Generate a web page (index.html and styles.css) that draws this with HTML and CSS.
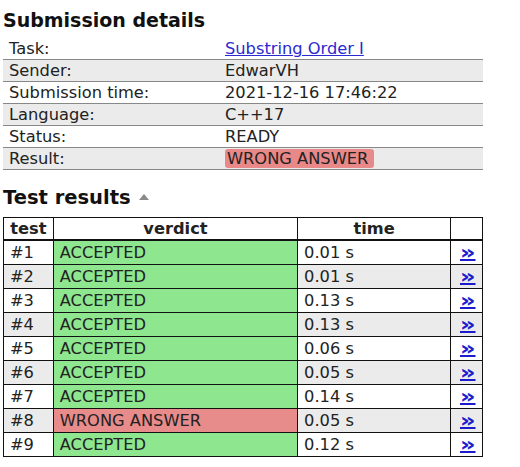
FILE: index.html
```html
<!DOCTYPE html>
<html>
<head>
<meta charset="utf-8">
<link rel="stylesheet" href="styles.css">
</head>
<body>
<h2 class="title">Submission details</h2>
<table class="summary">
<tr><td class="label">Task:</td><td><a href="#" class="task">Substring Order I</a></td></tr>
<tr><td class="label">Sender:</td><td>EdwarVH</td></tr>
<tr><td class="label">Submission time:</td><td>2021-12-16 17:46:22</td></tr>
<tr><td class="label">Language:</td><td>C++17</td></tr>
<tr><td class="label">Status:</td><td>READY</td></tr>
<tr><td class="label">Result:</td><td><span class="badge">WRONG ANSWER</span></td></tr>
</table>
<h2 class="title sub">Test results <span class="tri"></span></h2>
<table class="tests">
<tr><th class="c-test">test</th><th class="c-verdict">verdict</th><th class="c-time">time</th><th class="c-link"></th></tr>
<tr><td>#1</td><td class="ok">ACCEPTED</td><td>0.01 s</td><td class="lk"><a href="#">»</a></td></tr>
<tr><td>#2</td><td class="ok">ACCEPTED</td><td>0.01 s</td><td class="lk"><a href="#">»</a></td></tr>
<tr><td>#3</td><td class="ok">ACCEPTED</td><td>0.13 s</td><td class="lk"><a href="#">»</a></td></tr>
<tr><td>#4</td><td class="ok">ACCEPTED</td><td>0.13 s</td><td class="lk"><a href="#">»</a></td></tr>
<tr><td>#5</td><td class="ok">ACCEPTED</td><td>0.06 s</td><td class="lk"><a href="#">»</a></td></tr>
<tr><td>#6</td><td class="ok">ACCEPTED</td><td>0.05 s</td><td class="lk"><a href="#">»</a></td></tr>
<tr><td>#7</td><td class="ok">ACCEPTED</td><td>0.14 s</td><td class="lk"><a href="#">»</a></td></tr>
<tr><td>#8</td><td class="wa">WRONG ANSWER</td><td>0.05 s</td><td class="lk"><a href="#">»</a></td></tr>
<tr><td>#9</td><td class="ok">ACCEPTED</td><td>0.12 s</td><td class="lk"><a href="#">»</a></td></tr>
</table>
</body>
</html>
```
FILE: styles.css
```css
html, body {
  margin: 0;
  background: #fff;
}
body {
  padding: 0 3px;
  font-family: "DejaVu Sans", Verdana, sans-serif;
  font-size: 16.25px;
  color: #222;
}
.title {
  font-family: "DejaVu Sans", Verdana, sans-serif;
  font-weight: bold;
  font-size: 19px;
  color: #111;
  margin: 0;
  padding-top: 8px;
  height: 38px;
  line-height: 24px;
  box-sizing: border-box;
}
.title.sub {
  margin-top: 8px;
  height: 39px;
  font-size: 19.5px;
}
.tri {
  display: inline-block;
  width: 0;
  height: 0;
  border-left: 5px solid transparent;
  border-right: 5px solid transparent;
  border-bottom: 6px solid #8a8a8a;
  margin-left: 2px;
  vertical-align: 4px;
}
.summary {
  border-collapse: collapse;
  width: 480px;
}
.summary td {
  padding: 0 0 0 6px;
  height: 21px;
  line-height: 21px;
  border-bottom: 1px solid #888;
}
.summary td.label {
  width: 210px;
}
.summary tr:nth-child(even) td {
  background: #ebebeb;
}
.task {
  color: #2a2ad0;
  text-decoration: underline;
}
.badge {
  background: #e88888;
  border-radius: 3px;
  padding: 0 6px 0 2px;
  color: #222;
}
.tests {
  border-collapse: collapse;
  width: 480px;
}
.tests th, .tests td {
  border: 1px solid #111;
  height: 23px;
  line-height: 21px;
  padding: 0 0 0 6px;
}
.tests th {
  font-weight: bold;
  text-align: center;
  padding: 0;
  height: 20px;
  border-bottom: 2px solid #111;
}
.c-test { width: 49px; }
.c-verdict { width: 246px; }
.c-time { width: 154px; }
.c-link { width: 31px; }
.tests tr:nth-child(odd) td {
  background: #ebebeb;
}
.tests tr td.ok {
  background: #8ee68e;
}
.tests tr td.wa {
  background: #e88b8b;
}
.tests td.lk {
  padding: 0 0 0 9px;
}
.lk a {
  display: inline-block;
  color: #1c1ccc;
  font-weight: bold;
  font-size: 20px;
  line-height: 21px;
  transform: scaleX(1.2);
  transform-origin: left center;
  text-decoration: underline;
  text-decoration-thickness: 2px;
  text-underline-offset: 0px;
}
```
